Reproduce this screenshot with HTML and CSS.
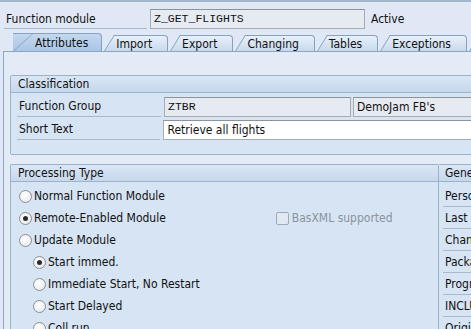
FILE: index.html
```html
<!DOCTYPE html>
<html lang="en">
<head>
    <meta charset="UTF-8">
    <title>Function Builder - Z_GET_FLIGHTS</title>
    <link rel="stylesheet" href="styles.css">
</head>
<body>
    <div class="top">
        <div class="head-row">
            <span class="lbl head-lbl">Function module</span>
            <span class="inp ro mono head-inp">Z_GET_FLIGHTS</span>
            <span class="status">Active</span>
        </div>

        <div class="tabs">
            <div class="tab active">Attributes</div>
            <div class="tab">Import</div>
            <div class="tab">Export</div>
            <div class="tab">Changing</div>
            <div class="tab">Tables</div>
            <div class="tab">Exceptions</div>
            <div class="tab">Source code</div>
        </div>
    </div>

    <div class="panel">
        <div class="group">
            <div class="ghead">Classification</div>
            <div class="gbody class-body">
                <div class="frow">
                    <span class="lbl">Function Group</span>
                    <span class="inp ro mono group-inp">ZTBR</span>
                    <span class="inp ro desc-inp">DemoJam FB's</span>
                </div>
                <div class="frow">
                    <span class="lbl">Short Text</span>
                    <span class="inp wide-inp">Retrieve all flights</span>
                </div>
            </div>
        </div>

        <div class="split">
            <div class="group proc">
                <div class="ghead">Processing Type</div>
                <div class="gbody list-body">
                    <div class="opt"><span class="radio"></span>Normal Function Module</div>
                    <div class="opt">
                        <span class="radio on"></span>Remote-Enabled Module
                        <span class="check-wrap"><span class="check"></span>BasXML supported</span>
                    </div>
                    <div class="opt"><span class="radio"></span>Update Module</div>
                    <div class="opt sub"><span class="radio on"></span>Start immed.</div>
                    <div class="opt sub"><span class="radio"></span>Immediate Start, No Restart</div>
                    <div class="opt sub"><span class="radio"></span>Start Delayed</div>
                    <div class="opt sub"><span class="radio"></span>Coll.run</div>
                </div>
            </div>

            <div class="group general">
                <div class="ghead">General Data</div>
                <div class="gbody list-body">
                    <div class="opt"><span class="lbl side-lbl">Person Responsible</span></div>
                    <div class="opt"><span class="lbl side-lbl">Last Changed By</span></div>
                    <div class="opt"><span class="lbl side-lbl">Changed on</span></div>
                    <div class="opt"><span class="lbl side-lbl">Package</span></div>
                    <div class="opt"><span class="lbl side-lbl">Program Name</span></div>
                    <div class="opt"><span class="lbl side-lbl">INCLUDE Name</span></div>
                    <div class="opt"><span class="lbl side-lbl">Original Language</span></div>
                </div>
            </div>
        </div>
    </div>
</body>
</html>
```

FILE: styles.css
```css
* {
    margin: 0;
    padding: 0;
    box-sizing: border-box;
}

body {
    font-family: "DejaVu Sans", sans-serif;
    font-stretch: condensed;
    font-size: 12px;
    color: #111;
    background: #dfe8f4;
    border-top: 2px solid #a3b6cc;
    width: 471px;
    height: 329px;
    overflow: hidden;
}

.mono {
    font-family: "Liberation Mono", monospace;
    font-size: 11.5px;
}

/* header line */
.head-row {
    display: flex;
    align-items: center;
    padding: 7px 0 0 4px;
    height: 27px;
}

.lbl {
    display: block;
    border-bottom: 1px solid #a9b8ca;
    line-height: 18px;
    padding-left: 2px;
}

.head-lbl {
    width: 143px;
    margin-right: 3px;
}

.inp {
    display: block;
    height: 20px;
    line-height: 18px;
    padding-left: 3px;
    border: 1px solid #a7acb3;
    border-top-color: #8d939b;
    background: #fff;
    white-space: nowrap;
    overflow: hidden;
}

.inp.ro {
    background: #e6ebf1;
}

.head-inp {
    width: 215px;
}

.status {
    margin-left: 6px;
}

/* tabs */
.tabs {
    display: flex;
    align-items: flex-end;
    height: 22px;
    padding: 4px 0 0 13px;
    white-space: nowrap;
}

.tab {
    position: relative;
    z-index: 0;
    height: 16px;
    line-height: 16px;
    margin-left: 12px;
    padding: 0 15px 0 2px;
    border: 1px solid #88a1be;
    border-left: none;
    border-bottom: none;
    border-top-right-radius: 4px;
    background: linear-gradient(#e8f0f9, #c8d9ed);
}

.tab::before {
    content: "";
    position: absolute;
    z-index: -1;
    top: -1px;
    bottom: 0;
    left: -10px;
    width: 16px;
    border-left: 1px solid #88a1be;
    border-top: 1px solid #88a1be;
    background: inherit;
    transform-origin: bottom left;
    transform: skewX(-32deg);
}

.tab.active {
    height: 18px;
    line-height: 18px;
    margin-left: 0;
    padding-left: 22px;
    padding-right: 13px;
    background: linear-gradient(#c4d8ef, #a9c5e6);
}

.tab.active::before {
    left: 0;
    width: 30px;
    transform: skewX(-48deg);
}

/* tab page */
.panel {
    width: 560px;
    height: 280px;
    background: #e2ebf6;
    border-top: 1px solid #8ea6c2;
    border-left: 1px solid #8ea6c2;
    margin-left: 3px;
    padding: 23px 0 0 6px;
}

.group {
    border: 1px solid #9cb1ca;
    border-radius: 2px;
    background: #d6e4f4;
}

.ghead {
    height: 17px;
    line-height: 16px;
    padding-left: 7px;
    border-bottom: 1px solid #9cb1ca;
    background: linear-gradient(#d9e6f4, #c7d8ec);
}

.class-body {
    display: flex;
    flex-direction: column;
    gap: 3px;
    padding: 4px 0 14px 6px;
}

.frow {
    display: flex;
    height: 20px;
}

.frow .lbl {
    width: 144px;
    margin-right: 3px;
}

.group-inp {
    width: 187px;
    margin-right: 2px;
}

.desc-inp {
    width: 160px;
}

.wide-inp {
    width: 400px;
}

.split {
    display: flex;
    margin-top: 9px;
}

.proc {
    width: 428px;
    border-right: none;
    border-radius: 2px 0 0 2px;
}

.general {
    width: 120px;
}

.general .ghead {
    padding-left: 6px;
}

.list-body {
    padding-top: 3px;
    height: 160px;
}

.opt {
    display: flex;
    align-items: center;
    height: 22px;
    padding-left: 8px;
}

.opt.sub {
    padding-left: 22px;
}

.radio {
    width: 13px;
    height: 13px;
    margin-right: 2px;
    border: 1px solid #8b8f95;
    border-radius: 50%;
    background: radial-gradient(circle at 40% 35%, #ffffff, #e4e6e9);
    display: flex;
    align-items: center;
    justify-content: center;
}

.radio.on::after {
    content: "";
    width: 5px;
    height: 5px;
    border-radius: 50%;
    background: #2a2a2a;
}

.check-wrap {
    display: flex;
    align-items: center;
    margin-left: 110px;
    color: #8c9299;
}

.check {
    width: 13px;
    height: 13px;
    margin-right: 3px;
    border: 1px solid #a3a9b0;
    border-radius: 2px;
    background: #dfe8f3;
}

.general .opt {
    padding-left: 4px;
}

.side-lbl {
    width: 140px;
    line-height: 20px;
    white-space: nowrap;
}
```
